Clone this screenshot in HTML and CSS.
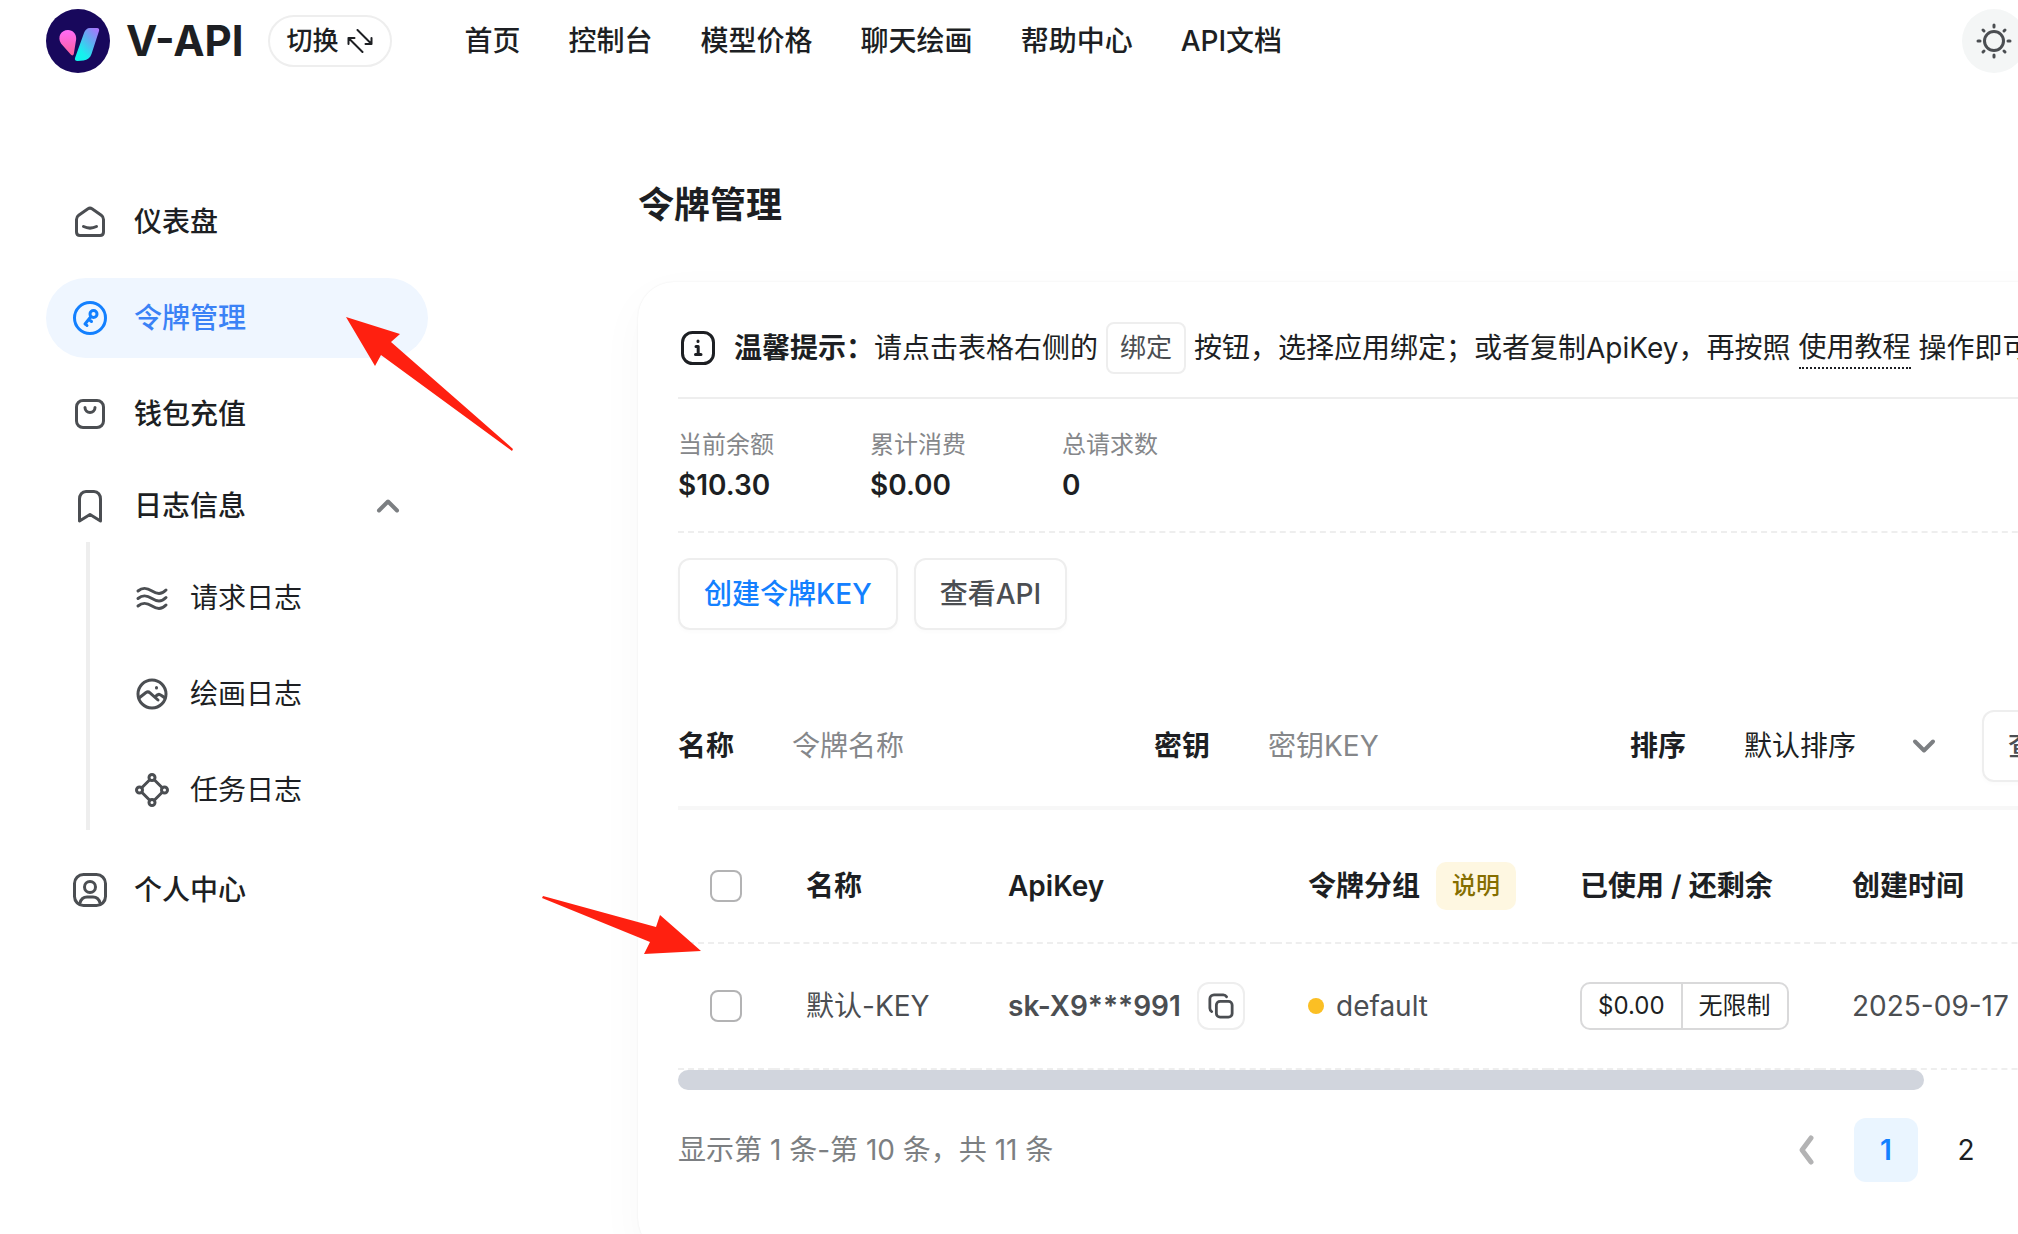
FILE: index.html
```html
<!DOCTYPE html>
<html lang="zh-CN">
<head>
<meta charset="utf-8">
<title>令牌管理 - V-API</title>
<link rel="stylesheet" href="styles.css">
</head>
<body>
<header class="topbar">
  <a class="brand" href="#">
    <svg class="logo" viewBox="0 0 64 64" aria-hidden="true">
      <defs>
        <linearGradient id="pink" x1="0" y1="0" x2="0" y2="1"><stop offset="0" stop-color="#ff6cf8"/><stop offset="1" stop-color="#fb5f9b"/></linearGradient>
        <linearGradient id="cyan" x1="1" y1="0" x2="0.2" y2="1"><stop offset="0" stop-color="#b56cff"/><stop offset="0.4" stop-color="#63a9f2"/><stop offset="0.8" stop-color="#17f0ee"/><stop offset="1" stop-color="#10f5ec"/></linearGradient>
      </defs>
      <circle cx="32" cy="32" r="32" fill="#18085c"/>
      <path d="M22 21c5 0 8.500 4 8.200 9l-2.400 15c-.5 1.800-2.200 1.800-3.300.3L15 34.500C11 28 15 21 22 21z" fill="url(#pink)"/>
      <path d="M44 19h7c2 0 2.500 1.500 2 3l-7.500 23c-1.500 4-4 6-8 6.500l-6 .5c-2 0-3-1.200-2.500-3L38 24c1-3 3-5 6-5z" fill="url(#cyan)"/>
    </svg>
    <span>V-API</span>
  </a>
  <button class="switch" type="button">切换
    <svg viewBox="0 0 26 24" aria-hidden="true"><path d="M10.500 1l14 14M18.500 15h6V9M15.500 23l-14-14M7.500 9h-6v6"/></svg>
  </button>
  <nav class="topnav">
    <a href="#">首页</a><a href="#">控制台</a><a href="#">模型价格</a><a href="#">聊天绘画</a><a href="#">帮助中心</a><a href="#">API文档</a>
  </nav>
  <button class="theme" type="button" aria-label="切换主题">
    <svg viewBox="0 0 36 36" aria-hidden="true"><circle cx="18" cy="18" r="9.500"/><path d="M18 2v2M18 32v2M2 18h2M32 18h2M7 7l1 1M28 28l1 1M7 29l1-1M28 8l1-1"/></svg>
  </button>
</header>

<div class="shell">
  <aside class="sidebar">
    <a class="item" href="#">
      <svg class="icon" viewBox="0 0 40 40"><path d="M6.500 17.500c0-1.800.8-3.200 2.200-4.200L18 6.800c1.300-.9 2.700-.9 4 0l9.300 6.500c1.400 1 2.200 2.400 2.200 4.200V30c0 2.200-1.300 3.500-3.500 3.500H10c-2.200 0-3.500-1.300-3.500-3.500z"/><path d="M13.500 24.500c4 2 9 2 13 0"/></svg>
      仪表盘</a>
    <a class="item active" href="#">
      <svg class="icon" viewBox="0 0 40 40"><circle cx="20" cy="20" r="15.500"/><circle cx="23.500" cy="16" r="3.500"/><path d="M21 18.500L15 26M19 21.500l2.500 2M15.200 25.800l1.800 1.700"/></svg>
      令牌管理</a>
    <a class="item" href="#">
      <svg class="icon" viewBox="0 0 40 40"><rect x="6.500" y="6.500" width="27" height="27" rx="6.500"/><path d="M15 13.500c0 6.500 10 6.500 10 0"/></svg>
      钱包充值</a>
    <button class="item group" type="button" aria-expanded="true">
      <svg class="icon" viewBox="0 0 40 40"><path d="M9.500 35V13c0-4 2.500-7.500 6.500-7.500h8c4 0 6.500 3.500 6.500 7.500v22L20 28.500z"/></svg>
      日志信息
      <svg class="chevron" viewBox="0 0 24 24"><path d="M3 16.500l9-9 9 9"/></svg>
    </button>
    <div class="children">
      <a class="item sub" href="#">
        <svg class="icon" viewBox="0 0 40 40"><path d="M6 13c5-4 9-3 14 0s9 4 14-1M6 20.500c5-4 9-3 14 0s9 4 14-1M6 28c5-4 9-3 14 0s9 4 14-1"/></svg>
        请求日志</a>
      <a class="item sub" href="#">
        <svg class="icon" viewBox="0 0 40 40"><circle cx="20" cy="20" r="14"/><path d="M7 24l7-5.500c1.500-1 2.500-1 4 .3l8 7.200M23.500 22.500c3-3.500 4.500-2.500 9.500 1.500M24.500 13.500v.5"/></svg>
        绘画日志</a>
      <a class="item sub" href="#">
        <svg class="icon" viewBox="0 0 40 40"><circle cx="20" cy="7.500" r="3"/><circle cx="20" cy="32.500" r="3"/><circle cx="7.500" cy="20" r="3"/><circle cx="32.500" cy="20" r="3"/><path d="M17.500 10L10 17.500M22.500 10l7.500 7.500M10 22.500l7.500 7.500M30 22.500L22.500 30"/></svg>
        任务日志</a>
    </div>
    <a class="item profile" href="#">
      <svg class="icon" viewBox="0 0 40 40"><rect x="4.500" y="4.500" width="31" height="31" rx="9"/><circle cx="20" cy="17" r="5.500"/><path d="M10 33c1-4 3-6 7-6h6c4 0 6 2 7 6"/></svg>
      个人中心</a>
  </aside>

  <main class="content">
    <h1>令牌管理</h1>
    <section class="card">
      <div class="notice">
        <svg class="info" viewBox="0 0 40 40"><rect x="4.500" y="4.500" width="31" height="31" rx="10"/><path d="M18 18.500h2.200v8M17.500 26.500H23M20 13v.5"/></svg>
        <strong>温馨提示：</strong>请点击表格右侧的<span class="chip">绑定</span>按钮，选择应用绑定；或者复制ApiKey，再按照<a class="guide" href="#">使用教程</a>操作即可
      </div>
      <dl class="stats">
        <div><dt>当前余额</dt><dd>$10.30</dd></div>
        <div><dt>累计消费</dt><dd>$0.00</dd></div>
        <div><dt>总请求数</dt><dd>0</dd></div>
      </dl>
      <div class="actions">
        <button class="btn primary" type="button">创建令牌KEY</button>
        <button class="btn" type="button">查看API</button>
      </div>
      <form class="filters">
        <div class="field"><label for="f-name">名称</label><input id="f-name" type="text" placeholder="令牌名称"></div>
        <div class="field"><label for="f-key">密钥</label><input id="f-key" type="text" placeholder="密钥KEY"></div>
        <div class="field sort"><label for="f-sort">排序</label>
          <select id="f-sort"><option>默认排序</option></select>
          <svg class="chevron" viewBox="0 0 24 24"><path d="M3 7.500l9 9 9-9"/></svg>
        </div>
        <button class="btn" type="button">查询</button>
      </form>
      <table class="tokens">
        <colgroup><col class="c-check"><col class="c-name"><col class="c-key"><col class="c-group"><col class="c-usage"><col></colgroup>
        <thead>
          <tr>
            <th><input type="checkbox" aria-label="全选"></th>
            <th>名称</th>
            <th>ApiKey</th>
            <th><div class="cell">令牌分组<button class="tag" type="button">说明</button></div></th>
            <th>已使用 / 还剩余</th>
            <th>创建时间</th>
          </tr>
        </thead>
        <tbody>
          <tr>
            <td><input type="checkbox" aria-label="选择 默认-KEY"></td>
            <td>默认-KEY</td>
            <td><div class="cell"><b>sk-X9***991</b>
              <button class="copy" type="button" aria-label="复制"><svg viewBox="0 0 28 28"><rect x="9" y="9" width="17" height="17" rx="4"/><path d="M4 20c-1.300-.8-2-2-2-3.500V6.500C2 4 4 2 6.500 2h10c1.500 0 2.700.7 3.500 2"/></svg></button></div></td>
            <td><div class="cell"><i class="dot"></i>default</div></td>
            <td><div class="usage"><span>$0.00</span><span>无限制</span></div></td>
            <td>2025-09-17</td>
          </tr>
        </tbody>
      </table>
      <div class="track"><div class="thumb"></div></div>
      <footer class="footer">
        <span>显示第 1 条-第 10 条，共 11 条</span>
        <div class="pager">
          <button type="button" aria-label="上一页"><svg viewBox="0 0 28 32"><path d="M19 4L10 16l9 12"/></svg></button>
          <button class="current" type="button">1</button>
          <button type="button">2</button>
          <button type="button" aria-label="下一页"><svg viewBox="0 0 28 32"><path d="M9 4l9 12-9 12"/></svg></button>
        </div>
      </footer>
    </section>
  </main>
</div>

<svg class="arrow arrow-menu" viewBox="0 0 168 136" aria-hidden="true"><path d="M0 1l54 17-9 8 122 107-1 2L35 39l-6 11z"/></svg>
<svg class="arrow arrow-table" viewBox="0 0 160 60" aria-hidden="true"><path d="M1 1l113 31 4-12 41 36-57 3 6-12L0 3z"/></svg>
</body>
</html>
```
FILE: styles.css
```css
* { box-sizing: border-box; }

body {
  margin: 0;
  height: 100vh;
  overflow: hidden;
  position: relative;
  background: #fff;
  color: #1d1f23;
  font: 400 28px/40px Inter, "Noto Sans CJK SC", sans-serif;
}

button, input, select { font: inherit; color: inherit; margin: 0; }
button { cursor: pointer; background: none; border: 0; padding: 0; }
a { color: inherit; text-decoration: none; }
svg { fill: none; stroke: currentColor; stroke-width: 3; stroke-linecap: round; stroke-linejoin: round; flex: none; }

/* Top bar */
.topbar { display: flex; align-items: center; height: 82px; padding-left: 46px; margin-right: -8px; }
.brand { display: flex; align-items: center; gap: 16px; font-size: 42px; font-weight: 700; }
.logo { width: 64px; height: 64px; stroke: none; }
.switch {
  display: flex; align-items: center; justify-content: center; gap: 8px;
  width: 124px; height: 52px; margin-left: 24px;
  border: 2px solid #eee; border-radius: 26px;
  font-size: 26px; font-weight: 500; white-space: nowrap;
}
.switch svg { width: 26px; height: 24px; stroke-width: 2; }
.topnav { display: flex; gap: 48px; margin-left: 73px; font-weight: 500; white-space: nowrap; }
.theme {
  display: grid; place-items: center;
  width: 64px; height: 64px; margin-left: auto;
  border-radius: 50%; background: #f4f6f6; color: #4b4e52;
}
.theme svg { width: 36px; height: 36px; }

/* Layout */
.shell { display: flex; align-items: flex-start; padding-left: 46px; }
.sidebar { flex: none; width: 382px; padding-top: 100px; display: flex; flex-direction: column; }
.content { flex: 1; min-width: 0; margin-left: 210px; margin-right: -100px; padding-top: 101px; }

/* Sidebar */
.item {
  display: flex; align-items: center; gap: 24px;
  height: 80px; margin-bottom: 16px; padding-left: 24px;
  border-radius: 40px; font-weight: 500; white-space: nowrap;
}
.icon { width: 40px; height: 40px; color: #4b4e52; }
.item.active { background: #eff6ff; color: #3b82f6; }
.item.active .icon { color: #1380ff; }
.item.group { height: 72px; margin-bottom: 0; padding-right: 28px; }
.chevron { width: 24px; height: 24px; color: #7c7f82; stroke-width: 4; }
.item.group .chevron { margin-left: auto; }
.children { margin-left: 40px; padding-left: 40px; border-left: 4px solid #eee; }
.item.sub { gap: 18px; margin: 0; padding-left: 2px; font-weight: 400; height: 96px; padding-top: 16px; }
.item.profile { margin-top: 20px; }

/* Card */
h1 { margin: 0 0 55px; font-size: 36px; line-height: 44px; font-weight: 600; }
.card {
  padding: 40px 40px 72px;
  border-radius: 36px; background: #fff;
  box-shadow: 0 0 2px rgba(0, 0, 0, .08), 0 16px 48px rgba(0, 0, 0, .03);
}
.notice {
  display: flex; align-items: center;
  padding-bottom: 23px; border-bottom: 2px solid #eee; white-space: nowrap;
}
.notice strong { font-weight: 600; }
.info { width: 40px; height: 40px; margin-right: 16px; }
.chip {
  height: 52px; margin: 0 8px; padding: 4px 12px;
  border: 2px solid #eee; border-radius: 8px;
  color: #4b4e52; font-size: 26px;
}
.guide { margin: 0 8px; border-bottom: 2px dotted #1d1f23; }

.stats { display: flex; gap: 96px; margin: 0; padding: 26px 0; border-bottom: 2px dashed #eee; }
.stats div { min-width: 96px; }
.stats dt { color: #85878a; font-size: 24px; }
.stats dd { margin: 0; font-weight: 600; }

.btn {
  flex: none; height: 72px; padding: 0 24px;
  border: 2px solid #eee; border-radius: 12px;
  background: #fff; color: #4b4e52; font-weight: 500;
  box-shadow: 0 2px 4px rgba(0, 0, 0, .02); white-space: nowrap;
}
.btn.primary { color: #1380ff; }
.actions { display: flex; gap: 16px; margin: 25px 0 80px; }

.filters { display: flex; gap: 16px; padding-bottom: 24px; border-bottom: 4px solid #f7f7f7; }
.field { display: flex; align-items: center; flex: none; width: 460px; height: 72px; }
.field label { flex: none; width: 90px; font-weight: 600; }
.field input, .field select {
  flex: 1; min-width: 0; height: 72px; padding: 0 24px;
  border: 0; outline: 0; background: transparent; appearance: none;
}
.field input::placeholder { color: #85878a; opacity: 1; }
.sort { width: 336px; padding-right: 30px; }

/* Table */
.tokens { width: 100%; margin-top: 20px; table-layout: fixed; border-collapse: separate; border-spacing: 0; color: #4b4e52; }
.c-check { width: 96px; }
.c-name { width: 202px; }
.c-key { width: 300px; }
.c-group, .c-usage { width: 272px; }
.tokens th, .tokens td { padding: 0 0 0 32px; border-bottom: 2px dashed #eee; text-align: left; white-space: nowrap; vertical-align: middle; }
.tokens th { height: 114px; color: #1d1f23; font-weight: 600; }
.tokens td { height: 126px; }
.tokens b { font-weight: 600; }
.tokens input {
  display: block; width: 32px; height: 32px; appearance: none;
  border: 2px solid #b3b3b4; border-radius: 8px; background: #fff;
}
.cell { display: flex; align-items: center; }
.tag { width: 80px; height: 48px; margin-left: 16px; border-radius: 10px; background: #fef7e1; color: #856e00; font-size: 24px; font-weight: 500; }
.copy { display: grid; place-items: center; width: 48px; height: 48px; margin-left: 16px; border: 2px solid #eee; border-radius: 12px; }
.copy svg { width: 26px; height: 26px; }
.dot { width: 16px; height: 16px; margin-right: 12px; border-radius: 50%; background: #fbbf24; }
.usage {
  display: inline-flex; height: 48px; vertical-align: middle;
  border: 2px solid #d9d9da; border-radius: 10px;
  color: #1d1f23; font-size: 24px; line-height: 44px;
}
.usage span { padding: 0 16px; }
.usage span + span { border-left: 2px solid #d9d9da; }

.track { height: 20px; }
.thumb { width: 89%; height: 20px; border-radius: 10px; background: #d1d5dd; }

.footer { display: flex; align-items: center; justify-content: space-between; margin-top: 28px; color: #7c7f82; }
.pager { display: flex; gap: 16px; }
.pager button { display: grid; place-items: center; width: 64px; height: 64px; border-radius: 12px; color: #1d1f23; }
.pager .current { background: #eaf5ff; color: #1380ff; font-weight: 600; }
.pager svg { width: 28px; height: 32px; color: #b3b3b4; stroke-width: 5; }

/* Pointers laid over the page */
.arrow { position: absolute; fill: #ff2010; stroke: none; pointer-events: none; }
.arrow-menu { left: 346px; top: 316px; width: 168px; height: 136px; }
.arrow-table { left: 542px; top: 895px; width: 160px; height: 60px; }
```
